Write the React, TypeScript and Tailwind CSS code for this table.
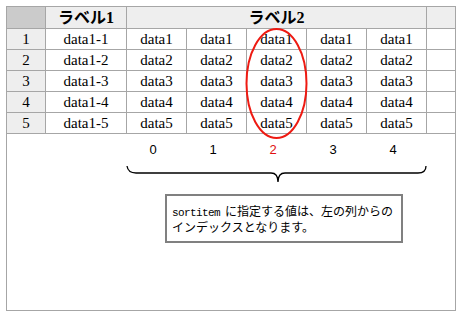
const serif = "font-['Liberation_Serif','Noto_Sans_CJK_JP',serif]";

const rows = [1, 2, 3, 4, 5];

function Cell({ children, head }: { children?: React.ReactNode; head?: boolean }) {
  return (
    <div
      className={`flex items-center justify-center text-[15px] leading-none text-black ${serif} ${
        head ? "bg-[#eeeeee]" : "bg-white"
      }`}
    >
      {children}
    </div>
  );
}

export default function App() {
  return (
    <div className="relative w-[462px] h-[318px] bg-white pt-[6px] pl-[6px]">
      <div className="w-[450px] h-[305px] border border-[#a6a6a6] flex flex-col">
        {/* table */}
        <div className="grid grid-cols-[38px_80px_59px_59px_59px_59px_59px_28px] grid-rows-[21px_repeat(5,20px)] gap-px bg-[#a6a6a6] border-b border-[#a6a6a6]">
          <div className="bg-[#cbcbcb]" />
          <div className={`bg-[#eeeeee] flex items-center justify-center text-[16px] font-bold leading-none ${serif}`}>
            ラベル1
          </div>
          <div className={`col-span-5 bg-[#eeeeee] flex items-center justify-center text-[16px] font-bold leading-none ${serif}`}>
            ラベル2
          </div>
          <div className="bg-[#eeeeee]" />
          {rows.map((r) => (
            <div key={r} className="contents">
              <Cell head>{r}</Cell>
              <Cell>data1-{r}</Cell>
              <Cell>data{r}</Cell>
              <Cell>data{r}</Cell>
              <Cell>data{r}</Cell>
              <Cell>data{r}</Cell>
              <Cell>data{r}</Cell>
              <Cell />
            </div>
          ))}
        </div>

        {/* column indexes */}
        <div className="mt-[9px] ml-[116px] grid grid-cols-[60px_60px_60px_60px_60px] h-[14px] text-[13px] leading-[14px] font-['Liberation_Sans',sans-serif] text-black">
          {[0, 1, 2, 3, 4].map((n) => (
            <div key={n} className={`text-center ${n === 2 ? "text-[#e01010]" : ""}`}>
              {n}
            </div>
          ))}
        </div>

        {/* brace */}
        <svg className="mt-[6px] block" width="448" height="22" viewBox="0 0 448 22">
          <path
            d="M120,3 Q121,10 129,10 L264,10 Q271,10 271,19 Q271,10 278,10 L411,10 Q419,10 419,3"
            fill="none"
            stroke="#000"
            strokeWidth="1.3"
          />
        </svg>

        {/* note */}
        <div className="mt-[9px] ml-[158px] w-[238px] h-[49px] border-2 border-[#808080] pl-[5px] pt-[8px] text-[12px] leading-[14px] text-black font-['Noto_Sans_CJK_JP',sans-serif]">
          <span className="font-['Liberation_Mono',monospace] text-[11px] tracking-[-0.6px] mr-[5px]">sortitem</span>
          に指定する値は、左の列からの
          <br />
          インデックスとなります。
        </div>
      </div>

      <svg className="absolute left-0 top-0 pointer-events-none" width="462" height="318">
        <ellipse cx="276.5" cy="83.5" rx="30" ry="54.5" fill="none" stroke="#ee1a12" strokeWidth="2" />
      </svg>
    </div>
  );
}
